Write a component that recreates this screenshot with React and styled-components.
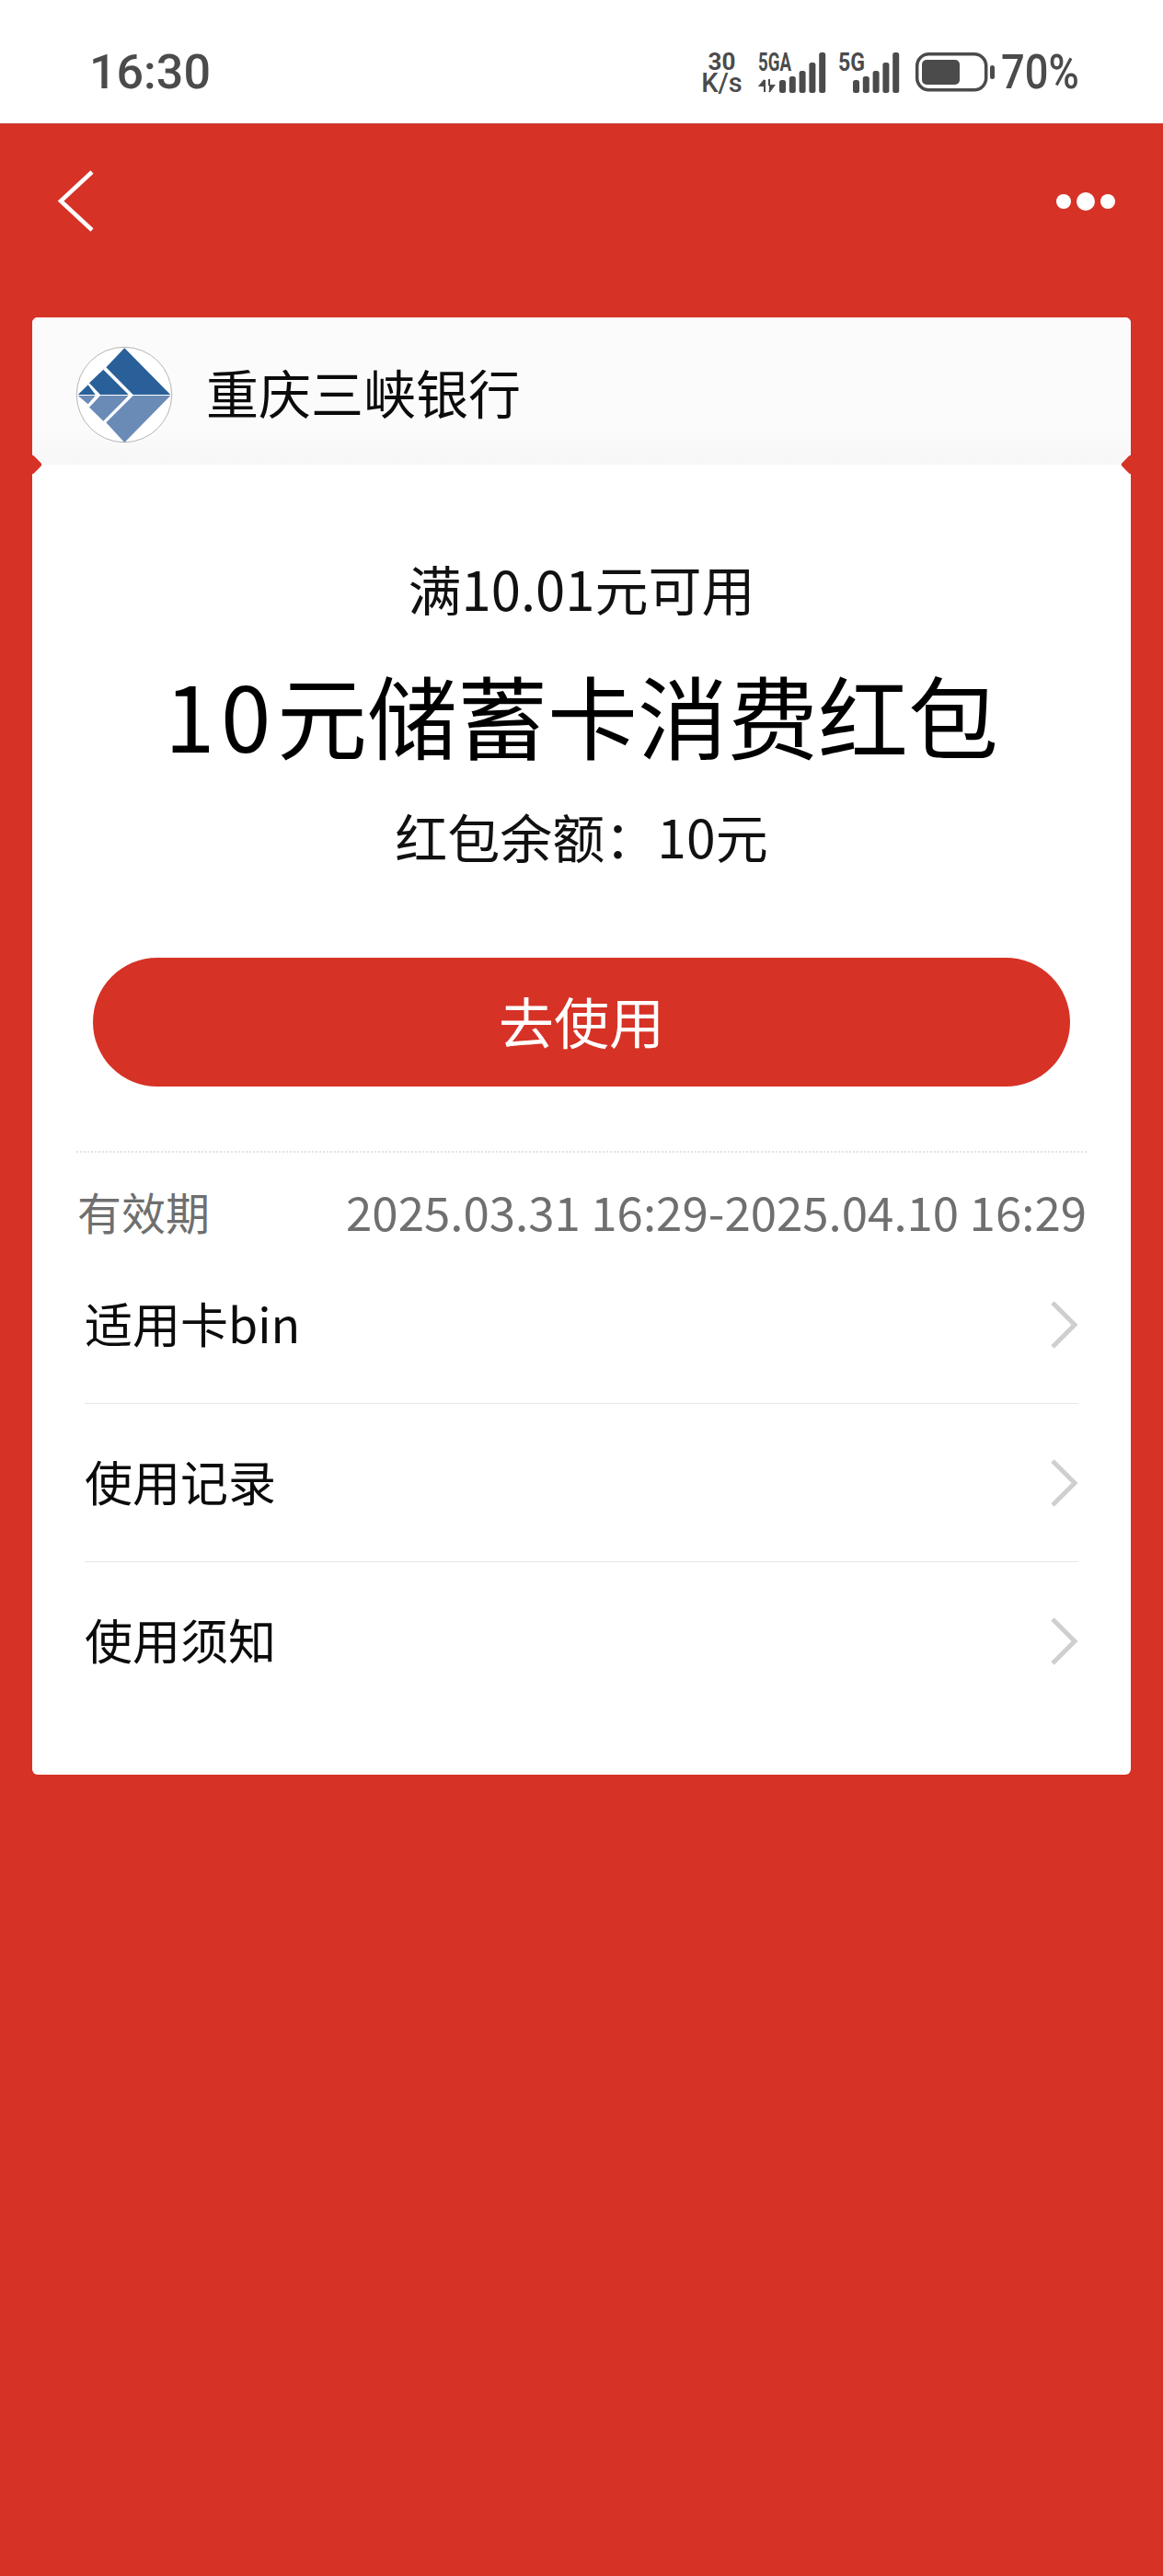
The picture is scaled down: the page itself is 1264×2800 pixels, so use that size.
import React from 'react'
import styled, { createGlobalStyle } from 'styled-components'

const GlobalStyle = createGlobalStyle`
  html, body {
    margin: 0;
    padding: 0;
    background: #d63226;
    font-family: "Noto Sans CJK SC", "Noto Sans", sans-serif;
  }
`
const Page = styled.div`
  width: 1264px;
  height: 2800px;
  background: #d63226;
  overflow: hidden;
`
const StatusBar = styled.div`
  height: 135px;
  background: #fff;
  display: flex;
  align-items: center;
  justify-content: space-between;
  padding: 24px 91px 0 97px;
  box-sizing: border-box;
  border-bottom: 1px solid #c9463c;
  color: #4b4b4b;
  font-family: Roboto, sans-serif;
`
const Clock = styled.div`
  font-weight: 500;
  font-size: 52px;
  line-height: 56px;
`
const StatusGroup = styled.div`
  display: flex;
  align-items: center;
`
const Speed = styled.div`
  width: 45px;
  margin-right: 17px;
  display: flex;
  flex-direction: column;
  align-items: center;
`
const SpeedValue = styled.div`
  font-weight: 700;
  font-size: 26px;
  line-height: 22px;
`
const SpeedUnit = styled.div`
  font-weight: 500;
  font-size: 29px;
  line-height: 24px;
`
const StatusIcons = styled.svg`
  display: block;
  width: 258px;
  height: 60px;
  margin-top: -15px;
`
const Percent = styled.div`
  width: 85px;
  margin-left: 6px;
  font-weight: 500;
  font-size: 52px;
  line-height: 46px;
  white-space: nowrap;
  transform: scaleX(0.87);
  transform-origin: left center;
`
const NavBar = styled.div`
  height: 210px;
  box-sizing: border-box;
  padding: 50px 52px 0 62px;
  display: flex;
  justify-content: space-between;
  align-items: flex-start;
`
const BackIcon = styled.svg`
  display: block;
  width: 42px;
  height: 67px;
`
const MoreButton = styled.div`
  display: flex;
  align-items: center;
  gap: 6px;
  height: 68px;
`
const Dot = styled.span`
  display: block;
  width: ${p => p.$size}px;
  height: ${p => p.$size}px;
  border-radius: 50%;
  background: #fff;
`
const Card = styled.div`
  margin: 0 35px;
  width: 1194px;
  height: 1584px;
  border-radius: 6px;
  background: #fff;
  position: relative;
`
const CardHeader = styled.div`
  height: 160px;
  box-sizing: border-box;
  padding: 7px 47px 0;
  display: flex;
  align-items: center;
  gap: 36px;
  border-radius: 6px 6px 0 0;
  background: linear-gradient(#fbfbfb 75%, #f7f7f7);
`
const Logo = styled.svg`
  display: block;
  width: 106px;
  height: 106px;
`
const BankName = styled.div`
  font-size: 57px;
  line-height: 70px;
  color: #0b0b0b;
  margin-bottom: 7px;
`
const Notch = styled.span`
  position: absolute;
  top: 152px;
  ${p => p.$side}: -8px;
  width: 16px;
  height: 16px;
  background: #d63226;
  border-radius: 3px;
  transform: rotate(45deg);
`
const Summary = styled.div`
  display: flex;
  flex-direction: column;
  align-items: center;
  padding-top: 94px;
`
const Condition = styled.div`
  font-size: 58px;
  line-height: 80px;
  color: #111;
`
const Title = styled.div`
  margin-top: 36px;
  font-size: 98px;
  line-height: 120px;
  color: #000;
`
const TitleAmount = styled.span`
  letter-spacing: 6.5px;
`
const Balance = styled.div`
  margin-top: 33px;
  font-size: 57px;
  line-height: 80px;
  color: #111;
`
const UseButton = styled.div`
  margin-top: 93px;
  width: 1062px;
  height: 140px;
  box-sizing: border-box;
  padding-bottom: 6px;
  border-radius: 70px;
  background: #d63226;
  color: #fff;
  font-size: 60px;
  display: flex;
  align-items: center;
  justify-content: center;
`
const Validity = styled.div`
  margin: 70px 48px 0;
  padding: 30px 0 5px;
  height: 66px;
  border-top: 2px dotted #e2e2e2;
  display: flex;
  justify-content: space-between;
  align-items: center;
  color: #6f6f6f;
`
const ValidityLabel = styled.div`
  font-size: 48px;
  margin-left: 1px;
`
const ValidityDates = styled.div`
  font-size: 51px;
`
const List = styled.div`
  margin: 0 57px;
`
const Row = styled.div`
  height: 171px;
  display: flex;
  align-items: center;
  justify-content: space-between;
  border-bottom: ${p => (p.$last ? 'none' : '1px solid #e6e6e6')};
  color: #0b0b0b;
`
const RowLabel = styled.div`
  font-size: 52px;
  margin-bottom: 5px;
`
const Chevron = styled.svg`
  display: block;
  width: 32px;
  height: 54px;
`

function RowChevron() {
  return (
    <Chevron viewBox="0 0 32 54">
      <path d="M4 3 L28 27 L4 51" fill="none" stroke="#cfcfcf" strokeWidth="5" />
    </Chevron>
  )
}

function Signal({ x, label, labelWidth, barsX, first }) {
  const heights = [14, 18, 24, 33, 44]
  return (
    <g>
      <text x={x} y="35" fontFamily="Roboto, sans-serif" fontWeight="700" fontSize="27" fill="#4b4b4b" textLength={labelWidth} lengthAdjust="spacingAndGlyphs">{label}</text>
      {heights.map((h, i) => (
        <rect key={i} x={barsX + i * 10.8} y={59 - h} width="7" height={h} rx="2.5" fill="#4b4b4b" />
      ))}
      {first && (
        <path d="M76 45 l-5 6 h5 v-6 M76 51 v7 M81 44 v7 M81 58 l5 -7 h-5" fill="#4b4b4b" stroke="#4b4b4b" strokeWidth="2" />
      )}
    </g>
  )
}

function StatusGlyphs() {
  return (
    <StatusIcons viewBox="69 0 258 60">
      <Signal x={69} label="5GA" labelWidth={36} barsX={92} first />
      <Signal x={156} label="5G" labelWidth={29} barsX={172} />
      <rect x="241.7" y="16.7" width="75" height="39" rx="13" fill="none" stroke="#4b4b4b" strokeWidth="3.5" />
      <rect x="247" y="23" width="41" height="27" rx="5" fill="#4b4b4b" />
      <rect x="321" y="29" width="5" height="15" rx="2.5" fill="#4b4b4b" />
    </StatusIcons>
  )
}

function BankLogo() {
  return (
    <Logo viewBox="-1 -1 106 106">
      <circle cx="52" cy="52" r="51.7" fill="#fff" stroke="#b5b5b5" strokeWidth="1" />
      <g fill="#2a6099">
        <polygon points="52.3,1.3 102.3,52.1 61.7,52.1 32.3,22.3" />
        <polygon points="29.3,24.7 56.7,52.1 26,52.1 14,39.3" />
        <polygon points="1.7,52.1 12.7,41.3 20.7,52.1" />
      </g>
      <g fill="#6b8bb7">
        <polygon points="102.3,53 61.7,53 32.3,82.3 52.3,104" />
        <polygon points="56.7,53 26,53 14,65.7 29.3,80.7" />
        <polygon points="1.7,53 20.7,53 12.7,62.3" />
      </g>
    </Logo>
  )
}

export default function App() {
  return (
    <Page>
      <GlobalStyle />
      <StatusBar>
        <Clock>16:30</Clock>
        <StatusGroup>
          <Speed>
            <SpeedValue>30</SpeedValue>
            <SpeedUnit>K/s</SpeedUnit>
          </Speed>
          <StatusGlyphs />
          <Percent>70%</Percent>
        </StatusGroup>
      </StatusBar>
      <NavBar>
        <BackIcon viewBox="0 0 42 67">
          <path d="M38 2 L4 33.5 L38 65" fill="none" stroke="#fff" strokeWidth="4.5" />
        </BackIcon>
        <MoreButton>
          <Dot $size={16} />
          <Dot $size={20} />
          <Dot $size={16} />
        </MoreButton>
      </NavBar>
      <Card>
        <CardHeader>
          <BankLogo />
          <BankName>重庆三峡银行</BankName>
        </CardHeader>
        <Notch $side="left" />
        <Notch $side="right" />
        <Summary>
          <Condition>满10.01元可用</Condition>
          <Title><TitleAmount>10</TitleAmount>元储蓄卡消费红包</Title>
          <Balance>红包余额：10元</Balance>
          <UseButton>去使用</UseButton>
        </Summary>
        <Validity>
          <ValidityLabel>有效期</ValidityLabel>
          <ValidityDates>2025.03.31 16:29-2025.04.10 16:29</ValidityDates>
        </Validity>
        <List>
          <Row><RowLabel>适用卡bin</RowLabel><RowChevron /></Row>
          <Row><RowLabel>使用记录</RowLabel><RowChevron /></Row>
          <Row $last><RowLabel>使用须知</RowLabel><RowChevron /></Row>
        </List>
      </Card>
    </Page>
  )
}
